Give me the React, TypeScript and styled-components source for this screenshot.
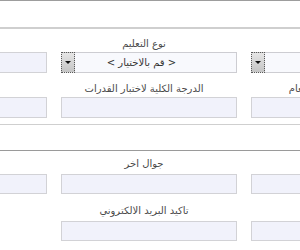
import styled, { createGlobalStyle } from "styled-components";

const GlobalStyle = createGlobalStyle`
  html, body {
    margin: 0;
    padding: 0;
    background: #fff;
    overflow: hidden;
  }
  body {
    font-family: "DejaVu Sans", "Noto Sans", sans-serif;
  }
`;

const Page = styled.div`
  width: 300px;
  height: 250px;
  overflow: hidden;
`;

const TopBar = styled.div`
  height: 26px;
  border-top: 1px solid #9d9d9d;
`;

const Section = styled.div<{ $bordered?: "top" | "box" }>`
  border-top: ${(p) => (p.$bordered === "box" ? "2px solid #cfcfcf" : "1px solid #9a9a9a")};
  border-bottom: ${(p) => (p.$bordered === "box" ? "1px solid #cfcfcf" : "none")};
  padding: ${(p) => (p.$bordered === "box" ? "8px 0 6px" : "6px 0 0")};
`;

const Spacer = styled.div`
  height: 25px;
`;

const Sheet = styled.div<{ $rowGap: number }>`
  direction: rtl;
  width: 566px;
  margin-left: -139px;
  display: grid;
  grid-template-columns: repeat(3, 186px);
  column-gap: 4px;
  row-gap: ${(p) => p.$rowGap}px;
`;

const Field = styled.div`
  display: flex;
  flex-direction: column;
  align-items: flex-start;
`;

const Label = styled.label<{ $gap: number }>`
  align-self: stretch;
  text-align: center;
  font-size: 10px;
  line-height: 14px;
  height: 14px;
  color: #4a4a4a;
  white-space: nowrap;
  margin-bottom: ${(p) => p.$gap}px;
`;

const Input = styled.div<{ $h: number }>`
  box-sizing: border-box;
  width: 176px;
  height: ${(p) => p.$h}px;
  background: #f1f2fb;
  border: 1px solid #d2d2d6;
`;

const Select = styled.div`
  box-sizing: border-box;
  width: 176px;
  height: 21px;
  background: #f8f9fd;
  border: 1px solid #cdcdd2;
  display: flex;
  align-items: stretch;
`;

const SelectText = styled.span`
  flex: 1;
  text-align: center;
  padding-right: 28px;
  font-size: 10px;
  line-height: 19px;
  color: #333;
  white-space: nowrap;
`;

const DropButton = styled.span`
  box-sizing: border-box;
  width: 14px;
  margin: -1px 0 -1px -1px;
  border: 1px dotted #5a5a5a;
  background: linear-gradient(#e6e6e6, #c4c4c4);
  display: flex;
  align-items: center;
  justify-content: center;
`;

const Arrow = styled.span`
  width: 0;
  height: 0;
  border-left: 3px solid transparent;
  border-right: 3px solid transparent;
  border-top: 3px solid #111;
`;

const Empty = styled.div``;

type Item = { label: string; kind: "input" | "select" | "none"; value?: string };

const sectionOne: Item[] = [
  { label: "الشهادة", kind: "select", value: "اختر" },
  { label: "نوع التعليم", kind: "select", value: "< قم بالاختيار >" },
  { label: "المسار", kind: "input" },
  { label: "المعدل الدراسي العام", kind: "input" },
  { label: "الدرجة الكلية لاختبار القدرات", kind: "input" },
  { label: "التحصيلي", kind: "input" },
];

const sectionTwo: Item[] = [
  { label: "الجوال", kind: "input" },
  { label: "جوال اخر", kind: "input" },
  { label: "الهاتف", kind: "input" },
  { label: "البريد الالكتروني", kind: "input" },
  { label: "تاكيد البريد الالكتروني", kind: "input" },
  { label: "", kind: "none" },
];

function renderField(item: Item, index: number, gap: number, h: number) {
  if (item.kind === "none") return <Empty key={index} />;
  return (
    <Field key={index}>
      <Label $gap={gap}>{item.label}</Label>
      {item.kind === "select" ? (
        <Select>
          <SelectText>{item.value}</SelectText>
          <DropButton>
            <Arrow />
          </DropButton>
        </Select>
      ) : (
        <Input $h={h} />
      )}
    </Field>
  );
}

export default function App() {
  return (
    <Page>
      <GlobalStyle />
      <TopBar />
      <Section $bordered="box">
        <Sheet $rowGap={9}>{sectionOne.map((f, i) => renderField(f, i, 1, 21))}</Sheet>
      </Section>
      <Spacer />
      <Section $bordered="top">
        <Sheet $rowGap={10}>{sectionTwo.map((f, i) => renderField(f, i, 3, 20))}</Sheet>
      </Section>
    </Page>
  );
}
